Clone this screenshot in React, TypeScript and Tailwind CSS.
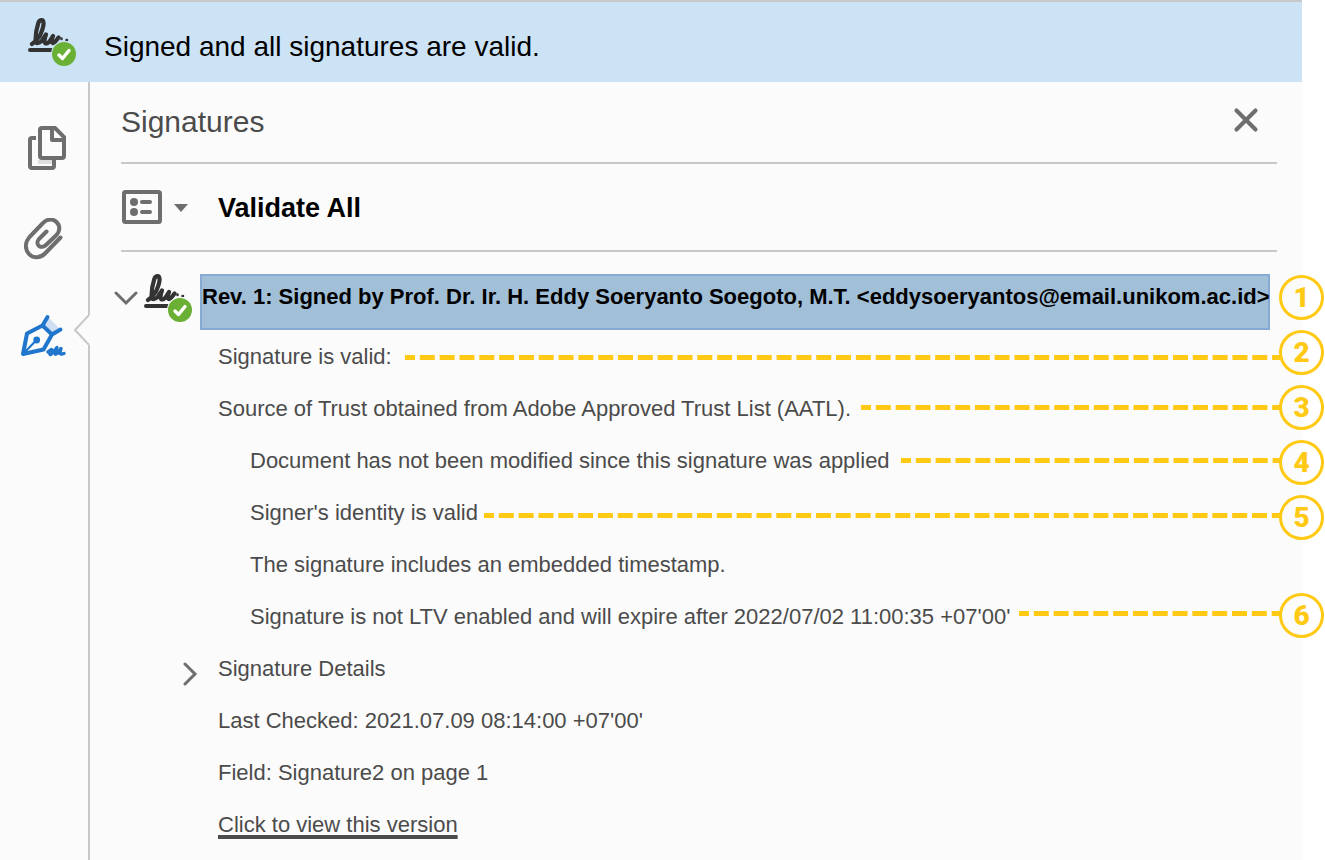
import { X } from "lucide-react";

type Callout = {
  number: number;
  badgeTop: string;
  line?: string;
};

const callouts: Callout[] = [
  { number: 1, badgeTop: "top-[275px]" },
  { number: 2, badgeTop: "top-[330px]", line: "top-[355px] w-[875px]" },
  { number: 3, badgeTop: "top-[385px]", line: "top-[405px] w-[419px]" },
  { number: 4, badgeTop: "top-[440px]", line: "top-[458px] w-[379px]" },
  { number: 5, badgeTop: "top-[495px]", line: "top-[513px] w-[796px]" },
  { number: 6, badgeTop: "top-[593px]", line: "top-[611px] w-[261px]" },
];

function Callouts() {
  return (
    <ol>
      {callouts.map(({ number, badgeTop, line }) => (
        <li key={number}>
          {line && (
            <svg className={`absolute right-[45px] h-[5px] ${line}`} aria-hidden="true">
              <line
                x1="0"
                y1="2.5"
                x2="100%"
                y2="2.5"
                stroke="#ffc914"
                strokeWidth="5"
                strokeDasharray="15 4.82"
                strokeDashoffset="5"
              />
            </svg>
          )}
          <span
            className={`absolute right-px flex size-[45px] items-center justify-center rounded-full border-3 border-[#ffc914] font-[Roboto,sans-serif] text-[28px] leading-none font-black text-[#ffc914] ${badgeTop}`}
          >
            {number}
          </span>
        </li>
      ))}
    </ol>
  );
}

function SignedIcon({ halo }: { halo: string }) {
  return (
    <svg className="size-12 shrink-0" viewBox="0 0 48 48" fill="none" aria-hidden="true">
      <g stroke="#333333" strokeLinecap="round" strokeLinejoin="round">
        <path d="M2 32H24" strokeWidth="4" />
        <path
          d="M4 26C7 24 10 21 12 17.500C14 13 16 8 15.500 4.500C15 1 11.500 1.500 10.300 5C9 9 7.500 17 7.500 22C7.700 26.500 11 26 14 22.500L18 16.500C16 22 16 25.500 18.500 25.500C21 25.500 23.500 20 25 18C23.500 22 23 25.500 25.500 25C27.500 24.500 29 21 30.500 19.500"
          strokeWidth="4.200"
        />
        <path d="M33.500 20.500V21M38.500 22H39" strokeWidth="2.500" />
      </g>
      <circle cx="36" cy="36" r="13" fill={halo} />
      <circle cx="36" cy="36" r="12" fill="#69b035" />
      <path d="M31 37L34.500 40.500L41 32.500" stroke="#fff" strokeWidth="3.400" strokeLinecap="round" strokeLinejoin="round" />
    </svg>
  );
}

function PagesIcon() {
  return (
    <svg className="h-[44px] w-[38px]" viewBox="0 0 38 44" fill="none" aria-hidden="true">
      <path d="M10 34H24V38H10Z" fill="#dedede" />
      <path
        d="M8 12H4Q2 12 2 14V40Q2 42 4 42H24Q26 42 26 40V33M14 2H27L36 11V30Q36 32 34 32H14Q12 32 12 30V4Q12 2 14 2Z"
        stroke="#6e6e6e"
        strokeWidth="4"
      />
      <path d="M24 2V14H36" stroke="#6e6e6e" strokeWidth="4" strokeLinejoin="round" />
    </svg>
  );
}

function ClipIcon() {
  return (
    <svg className="h-[42px] w-[40px]" viewBox="0 0 40 42" fill="none" aria-hidden="true">
      <path
        d="M36.500 19.500L21 35.500C16 40.500 9 40.500 5 36C0.500 31 1 24 5.500 19L19 5C23 0.500 29 0.500 32.500 4C36.500 8 36 13.500 32 17.500L22 27C16.500 32 10.500 26 15 21L22.500 13.500"
        stroke="#6e6e6e"
        strokeWidth="4"
        strokeLinecap="round"
        strokeLinejoin="round"
      />
    </svg>
  );
}

function PenIcon() {
  return (
    <svg className="h-[44px] w-[48px]" viewBox="0 0 48 44" fill="none" aria-hidden="true">
      <path d="M28 3L40 15L32 20L23 11Z" fill="#d0e0f2" />
      <g stroke="#2076cc" strokeLinecap="round" strokeLinejoin="round">
        <path d="M27.500 3L22.500 11.500L7 19.500L3 40L23.500 35.500L32 20.500L40.500 15.500M22.500 11.500L32 20.500" strokeWidth="4" />
        <path d="M3 40L16.500 26" strokeWidth="2.200" />
        <path
          d="M28 38L31.500 35.500L30 39Q29.500 41.500 31.500 40L37 33.500L35 38Q34.500 41.500 37 39.500L41 34.500L40 38Q39.500 41 44 39.500"
          strokeWidth="3.400"
        />
      </g>
      <circle cx="16.700" cy="26" r="3.400" fill="#2076cc" />
    </svg>
  );
}

function OptionsIcon() {
  return (
    <svg className="h-[34px] w-[69px]" viewBox="-1 0 69 34" fill="none" aria-hidden="true">
      <rect x="2" y="2" width="36" height="30" rx="1.500" stroke="#6e6e6e" strokeWidth="4" />
      <circle cx="12" cy="12" r="4" fill="#6e6e6e" />
      <circle cx="12" cy="22" r="4" fill="#6e6e6e" />
      <path d="M20 12H28M20 22H28" stroke="#6e6e6e" strokeWidth="4" strokeLinecap="round" />
      <path d="M52 14H66L59 22Z" fill="#6e6e6e" />
    </svg>
  );
}

function Sidebar() {
  return (
    <nav aria-label="Panels" className="flex shrink-0">
      <div className="flex w-[74px] flex-col pt-11">
        <button aria-label="Page thumbnails" className="ml-7 self-start">
          <PagesIcon />
        </button>
        <button aria-label="Attachments" className="mt-12 ml-6 self-start">
          <ClipIcon />
        </button>
        <button aria-label="Signatures" className="mt-[54px] ml-5 self-start">
          <PenIcon />
        </button>
      </div>
      <div className="flex w-4 flex-col">
        <div className="h-[233px] border-r-2 border-[#c8c8c8]" />
        <svg className="h-[30px] w-4" viewBox="0 0 16 30" fill="none" aria-hidden="true">
          <path d="M15 0L1 15L15 30" stroke="#c8c8c8" strokeWidth="2" />
        </svg>
        <div className="flex-1 border-r-2 border-[#c8c8c8]" />
      </div>
    </nav>
  );
}

export default function App() {
  return (
    <div className="relative min-h-screen overflow-x-hidden bg-white font-['Liberation_Sans',Arial,sans-serif] text-[22px] leading-[52px] text-[#4b4b4b]">
      <div className="mr-[23px] flex min-h-screen flex-col bg-[#fbfbfb]">
        <header className="flex h-[82px] items-center gap-7 border-t-2 border-[#c8c8c8] bg-[#cce2f5] pl-7 text-black">
          <SignedIcon halo="#cce2f5" />
          <p className="mt-2.5 text-[28px] leading-10">Signed and all signatures are valid.</p>
        </header>
        <div className="flex flex-1">
          <Sidebar />
          <main className="min-w-0 flex-1 pl-[31px]">
            <div className="mr-[25px] flex h-[82px] items-center justify-between border-b-2 border-[#c8c8c8] pr-3">
              <h1 className="text-[30px] leading-10">Signatures</h1>
              <button aria-label="Close" className="pb-1">
                <X className="size-[38px] text-[#6e6e6e]" strokeWidth={2.6} />
              </button>
            </div>
            <div className="mr-[25px] flex h-[88px] items-center gap-7 border-b-2 border-[#c8c8c8] text-black">
              <button aria-label="Signature options">
                <OptionsIcon />
              </button>
              <button className="pt-0.5 text-[27px] leading-10 font-bold">Validate All</button>
            </div>
            <div className="mt-[22px] mr-8 -ml-[7px] flex h-14">
              <button aria-label="Collapse revision" className="mt-4 self-start">
                <svg className="h-4 w-6" viewBox="0 0 24 16" fill="none" aria-hidden="true">
                  <path d="M2 3L12 13L22 3" stroke="#6e6e6e" strokeWidth="3" strokeLinecap="round" />
                </svg>
              </button>
              <div className="ml-1.5">
                <SignedIcon halo="#fbfbfb" />
              </div>
              <h2 className="ml-2 min-w-0 flex-1 border-2 border-[#86aad4] bg-[#a2bfd8] text-[22px] leading-[42px] font-bold whitespace-nowrap text-black">
                Rev. 1: Signed by Prof. Dr. Ir. H. Eddy Soeryanto Soegoto, M.T. &lt;eddysoeryantos@email.unikom.ac.id&gt;
              </h2>
            </div>
            <div className="pt-px pl-[97px]">
              <p>Signature is valid:</p>
              <p>Source of Trust obtained from Adobe Approved Trust List (AATL).</p>
              <ul className="pl-8">
                <li>Document has not been modified since this signature was applied</li>
                <li>Signer's identity is valid</li>
                <li>The signature includes an embedded timestamp.</li>
                <li>Signature is not LTV enabled and will expire after 2022/07/02 11:00:35 +07'00'</li>
              </ul>
              <button className="-ml-9 flex items-center gap-5">
                <svg className="mt-2.5 h-6 w-4" viewBox="0 0 16 24" fill="none" aria-hidden="true">
                  <path d="M3 2L13 12L3 22" stroke="#6e6e6e" strokeWidth="3" strokeLinecap="round" />
                </svg>
                Signature Details
              </button>
              <p>Last Checked: 2021.07.09 08:14:00 +07'00'</p>
              <p>Field: Signature2 on page 1</p>
              <a href="#version" className="block h-9 underline decoration-4 underline-offset-3">
                Click to view this version
              </a>
            </div>
          </main>
        </div>
      </div>
      <Callouts />
    </div>
  );
}
